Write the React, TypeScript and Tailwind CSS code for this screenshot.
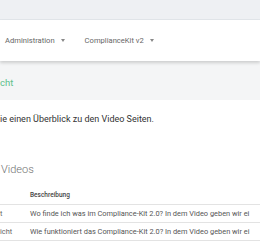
const rows = [
  { title: 't', text: 'Wo finde ich was im Compliance-Kit 2.0? In dem Video geben wir ei' },
  { title: 'icht', text: 'Wie funktioniert das Compliance-Kit 2.0? In dem Video geben wir ei' },
];

function Caret() {
  return <span className="ml-[6px] inline-block border-x-[2.5px] border-t-[3px] border-x-transparent border-t-[#888] align-middle" />;
}

export default function App() {
  return (
    <div className="w-[260px] h-[250px] overflow-hidden bg-white font-['Roboto',sans-serif]">
      {/* top strip */}
      <div className="h-[20px] bg-[#eef0f3] border-b border-[#e2e6ea]" />

      {/* main nav */}
      <div className="relative z-10 h-[41px] bg-white shadow-[0_2px_3px_rgba(0,0,0,0.16)] flex items-center gap-[20px] pl-[5px] text-[7.6px] text-[#666] whitespace-nowrap">
        <span>Administration<Caret /></span>
        <span>ComplianceKit v2<Caret /></span>
      </div>

      {/* page title band */}
      <div className="h-[39px] bg-[#f4f5f6] flex items-center pt-[6px] whitespace-nowrap">
        <span className="text-[9.5px] text-[#5cbf8c]">cht</span>
      </div>

      <div className="whitespace-nowrap">
        <p className="mt-[13px] text-[9px] text-[#333]">ie einen Überblick zu den Video Seiten.</p>

        <h2 className="mt-[37px] ml-[1px] text-[11px] font-light text-[#6f6f6f] leading-none">Videos</h2>

        <table className="mt-[13px] w-[300px] border-collapse text-[7.4px] text-[#555]">
          <thead>
            <tr className="border-b border-[#e3e3e3]">
              <th className="w-[30px] h-[17px] p-0" />
              <th className="p-0 text-left font-medium text-[6.5px] text-[#444]">Beschreibung</th>
            </tr>
          </thead>
          <tbody>
            {rows.map(r => (
              <tr key={r.title} className="border-b border-[#e3e3e3]">
                <td className="h-[18px] p-0 text-[#666]">{r.title}</td>
                <td className="p-0">{r.text}</td>
              </tr>
            ))}
          </tbody>
        </table>
      </div>
    </div>
  );
}
